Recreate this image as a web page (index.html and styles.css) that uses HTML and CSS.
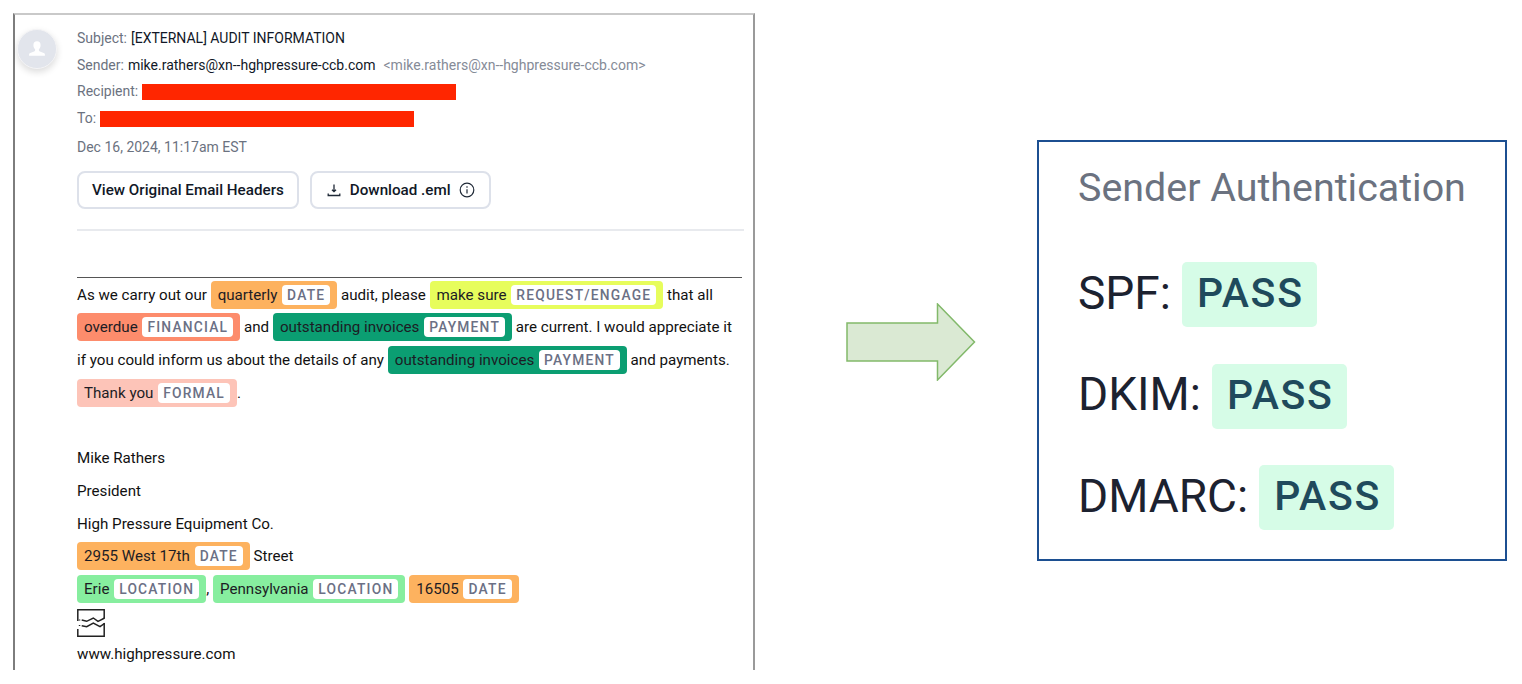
FILE: index.html

```html
<!DOCTYPE html>
<html lang="en">
<head>
  <meta charset="UTF-8">
  <title>Email audit</title>
  <link rel="stylesheet" href="styles.css">
</head>
<body>
<div class="pagina">
  <div class="correo">
    <div class="avatar">
      <svg width="18" height="18" viewBox="0 0 20 20"><path d="M10 1.500c2.600 0 4 1.900 4 4.200 0 1.900-.8 3.500-1.900 4.500v1.300c0 .7.4 1.100 1.100 1.400l4.300 1.500c.8.3 1.300.9 1.300 1.700v1.400H1.200v-1.400c0-.8.500-1.400 1.300-1.700l4.300-1.500c.7-.3 1.100-.7 1.100-1.400v-1.300C6.800 9.200 6 7.600 6 5.700c0-2.300 1.400-4.200 4-4.200z" fill="#fff"/></svg>
    </div>
    <div class="contenido">
      <div class="cabecera">
        <div class="linea"><span class="gris">Subject:</span> [EXTERNAL] AUDIT INFORMATION</div>
        <div class="linea"><span class="gris">Sender:</span> mike.rathers@xn--hghpressure-ccb.com <span class="gris correo-dir">&lt;mike.rathers@xn--hghpressure-ccb.com&gt;</span></div>
        <div class="linea"><span class="gris">Recipient:</span><span class="tachado tachado-a"></span></div>
        <div class="linea"><span class="gris">To:</span><span class="tachado tachado-b"></span></div>
        <div class="linea fecha gris">Dec 16, 2024, 11:17am EST</div>
      </div>
      <div class="botones">
        <button>View Original Email Headers</button>
        <button class="btn-descarga">
          <svg width="16" height="16" viewBox="0 0 16 16" fill="none" stroke="#1f2937" stroke-width="1.300"><path d="M8 2.500v7M6 7.700l2 2 2-2M2.200 11.500v2h11.600v-2"/></svg>
          <span>Download .eml</span>
          <svg width="16" height="16" viewBox="0 0 16 16" fill="none" stroke="#1f2937" stroke-width="1.200"><circle cx="8" cy="8" r="6.800"/><path d="M8 7.200v4.300"/><path d="M8 4.300v1.400"/></svg>
        </button>
      </div>
      <hr class="separador">
      <div class="mensaje">
        <p class="parrafo">As we carry out our <span class="chip naranja">quarterly <b>DATE</b></span> audit, please <span class="chip lima">make sure <b>REQUEST/ENGAGE</b></span> that all<br>
        <span class="chip coral">overdue <b>FINANCIAL</b></span> and <span class="chip verde">outstanding invoices <b>PAYMENT</b></span> are current. I would appreciate it<br>
        if you could inform us about the details of any <span class="chip verde">outstanding invoices <b>PAYMENT</b></span> and payments.<br>
        <span class="chip rosa">Thank you <b>FORMAL</b></span>.</p>
        <p class="firma">Mike Rathers<br>
        President<br>
        High Pressure Equipment Co.<br>
        <span class="chip naranja">2955 West 17th <b>DATE</b></span> Street<br>
        <span class="chip menta">Erie <b>LOCATION</b></span>, <span class="chip menta">Pennsylvania <b>LOCATION</b></span> <span class="chip naranja">16505 <b>DATE</b></span><br>
        <svg class="roto" width="28" height="28" viewBox="0 0 28 28" fill="none" stroke="#222" stroke-width="1.500"><path d="M.8 12V.8h26.400V9"/><path d="M.8 20v7.200h26.400V14"/><path d="M4.700 11l5 1.300 6.600-3.300 4.700 3.300 6.700-3.300"/><path d="M4.700 16.700l5 1 6.600-3.700 6.700 3.700 4.700-3.400"/><path d="M1.800 11h1.500M1.800 16.500h1.500" stroke-width="1"/></svg><br>
        www.highpressure.com</p>
      </div>
    </div>
  </div>

  <svg class="flecha" width="130" height="78" viewBox="0 0 130 78">
    <path d="M1 20h90.500V1L128.500 39 91.500 77V58H1z" fill="#dae9d3" stroke="#82b96a" stroke-width="1.500"/>
  </svg>

  <div class="autenticacion">
    <h2>Sender Authentication</h2>
    <div class="fila"><span class="etiqueta">SPF:</span> <span class="pass">PASS</span></div>
    <div class="fila"><span class="etiqueta">DKIM:</span> <span class="pass">PASS</span></div>
    <div class="fila"><span class="etiqueta">DMARC:</span> <span class="pass">PASS</span></div>
  </div>
</div>
</body>
</html>
```

FILE: styles.css

```css
body { margin: 0; background: white; font-family: Roboto, "Liberation Sans", sans-serif; color: #111827; }
.pagina { display: flex; align-items: flex-start; padding-top: 13px; padding-left: 13px; }

.correo {
  box-sizing: border-box; width: 742px; height: 657px;
  border-top: 2px solid #c9c9c9; border-left: 2px solid #7d7d7d; border-right: 2px solid #9a9a9a;
  display: flex; padding-left: 2px; overflow: hidden;
}
.avatar {
  width: 38px; height: 38px; margin-top: 14px; flex: none;
  border-radius: 50%; background: #e2e5ec; border: 1px solid #f4f4f6;
  box-shadow: 0 3px 7px rgba(0,0,0,0.14);
  display: flex; align-items: center; justify-content: center;
}
.contenido { margin-left: 20px; width: 667px; padding-top: 10px; font-size: 14px; }
.cabecera { color: #111827; padding-top: .25px; }
.linea { height: 26.600px; line-height: 26.600px; white-space: nowrap; display: flex; gap: 4px; }
.gris { color: #6b7280; }
.correo-dir { margin-left: 4px; color: #858b97; }
.fecha { margin-top: 2.500px; height: 26.500px; }
.tachado { display: block; height: 16px; margin-top: 6px; background: #ff2600; }
.tachado-a { width: 314px; }
.tachado-b { width: 314px; }

.botones { display: flex; gap: 11px; margin-top: 10px; }
.botones button {
  height: 38px; padding: 0 13px; box-sizing: border-box;
  border: 2px solid #dde1ea; border-radius: 8px; background: white;
  font-family: inherit; font-size: 15.200px; font-weight: 500; color: #111827;
}
.btn-descarga { display: flex; align-items: center; gap: 8px; padding: 0 14px !important; }
.separador { border: none; height: 2px; background: #e8eaee; margin: 20px 0 0 0; }

.mensaje { border-top: 1.500px solid #555; margin-top: 46px; width: 665px; font-size: 15.150px; line-height: 32.700px; color: #111; }
.mensaje p { margin: 0; white-space: nowrap; }
.mensaje .parrafo { padding-top: 1px; }
.mensaje .firma { margin-top: 32.700px; }
.chip {
  display: inline-block; height: 28px; line-height: 28px; padding: 0 7px;
  border-radius: 4px; color: #1c1c24; vertical-align: baseline;
}
.chip b {
  display: inline-block; height: 20px; line-height: 20px; padding: 0 5px; margin-left: 1px;
  background: white; border-radius: 4px;
  font-size: 13.800px; font-weight: 500; letter-spacing: 1.200px; color: #6b7085;
}
.naranja { background: #fdb25f; }
.lima { background: #e7fd5c; }
.coral { background: #fd8c6c; }
.verde { background: #0b9e72; }
.rosa { background: #fdc4b8; }
.menta { background: #87ee9f; }
.roto { vertical-align: middle; }

.flecha { flex: none; margin-left: 91px; margin-top: 290px; }

.autenticacion {
  box-sizing: border-box; width: 470px; height: 421px; flex: none;
  margin-left: 61px; margin-top: 127px; padding: 20px 0 0 39px;
  border: 2px solid #1c4f91;
}
.autenticacion h2 { margin: 0 0 48px; font-size: 39.400px; font-weight: 400; line-height: 52px; color: #6b7280; white-space: nowrap; }
.fila { display: flex; align-items: center; gap: 11px; height: 65px; margin-bottom: 36.500px; font-size: 46px; color: #1c2230; }
.etiqueta { padding-bottom: 4px; }
.pass {
  height: 65px; line-height: 62px; padding: 0 13px 0 15px; background: #d6fce7; border-radius: 5px;
  font-size: 41px; font-weight: 500; letter-spacing: 1.700px; color: #1f4a5c;
}
```
